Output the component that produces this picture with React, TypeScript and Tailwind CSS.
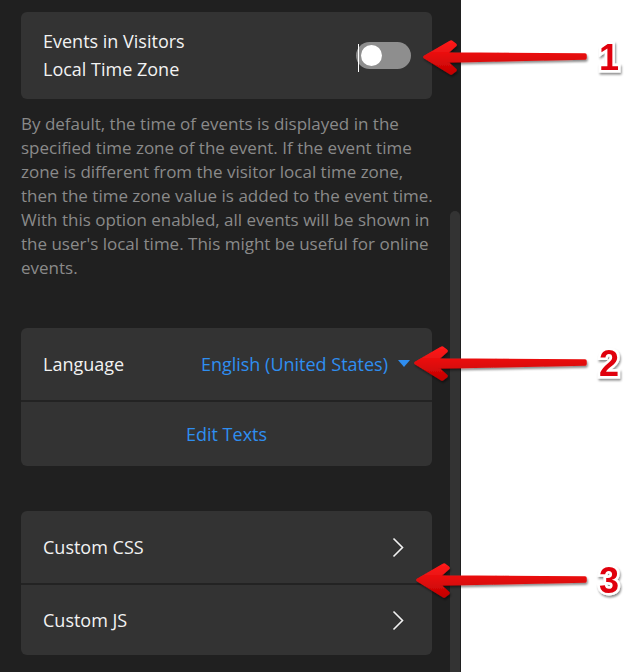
const font = { fontFamily: '"Open Sans", "Noto Sans", sans-serif' };

const Arrow = ({ tipX, y, num }: { tipX: number; y: number; num: string }) => {
  const bx = tipX + 30;
  return (
    <g>
      <g filter="url(#shadow)">
        <polygon
          points={`${tipX},${y} ${bx - 4},${y - 15} ${bx},${y - 12} ${bx - 10},${y - 3} 585,${y - 2} 585,${y + 1} ${bx - 10},${y + 4} ${bx},${y + 13} ${bx - 4},${y + 16}`}
          fill="url(#red)"
          stroke="url(#red)"
          strokeWidth={3.5}
          strokeLinejoin="round"
        />
      </g>
      <text
        x={609}
        y={y + 13}
        textAnchor="middle"
        fontSize={36}
        fontWeight={700}
        fontFamily="Liberation Sans, Arial, sans-serif"
        fill="#e0000a"
        stroke="#ffffff"
        strokeWidth={5}
        paintOrder="stroke"
        filter="url(#shadow)"
      >
        {num}
      </text>
    </g>
  );
};

const Chevron = () => (
  <svg width="12" height="21" viewBox="0 0 12 21" fill="none">
    <polyline points="1.5,1.5 10.5,10.5 1.5,19.5" stroke="#f2f2f2" strokeWidth={1.6} />
  </svg>
);

const App = () => {
  return (
    <div className="relative w-[631px] h-[672px] bg-white overflow-hidden" style={font}>
      <div className="relative w-[461px] h-full bg-[#202020] pl-[21px] pt-3">
        <div className="w-[411px]">
          <div className="flex items-center justify-between rounded-md bg-[#333333] pl-[22px] pr-[21px] pt-[15px] pb-[16px]">
            <div className="text-[18px] leading-[28px] text-[#f2f2f2]">
              Events in Visitors
              <br />
              Local Time Zone
            </div>
            <div className="relative h-[27px] w-[55px] rounded-full bg-[#8e8e8e]">
              <span className="absolute left-[5px] top-[3px] h-[21px] w-[21px] rounded-full bg-white" />
              <span className="absolute left-[2px] top-[2px] h-[28px] w-px bg-white" />
            </div>
          </div>

          <p className="mt-[13px] whitespace-nowrap text-[17px] leading-[24px] text-[#8a8a8a]">
            By default, the time of events is displayed in the
            <br />
            specified time zone of the event. If the event time
            <br />
            zone is different from the visitor local time zone,
            <br />
            then the time zone value is added to the event time.
            <br />
            With this option enabled, all events will be shown in
            <br />
            the user's local time. This might be useful for online
            <br />
            events.
          </p>

          <div className="mt-[48px] rounded-md bg-[#333333] overflow-hidden">
            <div className="flex h-[72px] items-center justify-between pl-[22px] pr-[22px] text-[18px]">
              <span className="text-[#f2f2f2]">Language</span>
              <span className="flex items-center gap-[10px] text-[#2f8ef0]">
                English (United States)
                <svg width="12" height="8" viewBox="0 0 12 8">
                  <polygon points="0,0 12,0 6,7" fill="#2f8ef0" />
                </svg>
              </span>
            </div>
            <div className="h-[2px] bg-[#232323]" />
            <div className="flex h-[64px] items-center justify-center text-[18px] text-[#2f8ef0]">Edit Texts</div>
          </div>

          <div className="mt-[45px] rounded-md bg-[#333333] overflow-hidden">
            <div className="flex h-[72px] items-center justify-between pl-[22px] pr-[28px] text-[18px] text-[#f2f2f2]">
              <span>Custom CSS</span>
              <Chevron />
            </div>
            <div className="h-[2px] bg-[#232323]" />
            <div className="flex h-[70px] items-center justify-between pl-[22px] pr-[28px] text-[18px] text-[#f2f2f2]">
              <span>Custom JS</span>
              <Chevron />
            </div>
          </div>
        </div>
        <div className="absolute right-[1px] top-[211px] bottom-0 w-[10px] rounded-t-full bg-[#333333]" />
      </div>

      <svg className="absolute inset-0" width="631" height="672">
        <defs>
          <linearGradient id="red" x1="0" y1="0" x2="0" y2="1">
            <stop offset="0" stopColor="#ff1a1a" />
            <stop offset="1" stopColor="#c40000" />
          </linearGradient>
          <filter id="shadow" x="-20%" y="-50%" width="140%" height="200%">
            <feDropShadow dx="1" dy="2" stdDeviation="1.2" floodColor="#000" floodOpacity="0.45" />
          </filter>
        </defs>
        <Arrow tipX={425} y={57} num="1" />
        <Arrow tipX={416} y={363} num="2" />
        <Arrow tipX={418} y={580} num="3" />
      </svg>
    </div>
  );
};

export default App;
